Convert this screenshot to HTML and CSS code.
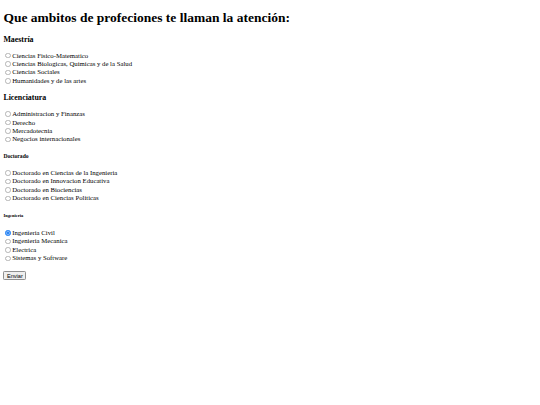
FILE: index.html
```html
<!DOCTYPE html>
<html>
<head>
<meta charset="utf-8">
<link rel="stylesheet" href="styles.css">
</head>
<body class="doc">
<h1 class="title">Que ambitos de profeciones te llaman la atención:</h1>
<form class="survey">
<h3 class="group">Maestría</h3>
<label class="opt"><input type="radio" name="m"><span>Ciencias Fisico-Matematico</span></label>
<label class="opt"><input type="radio" name="m"><span>Ciencias Biologicas, Quimicas y de la Salud</span></label>
<label class="opt"><input type="radio" name="m"><span>Ciencias Sociales</span></label>
<label class="opt"><input type="radio" name="m"><span>Humanidades y de las artes</span></label>
<h3 class="group">Licenciatura</h3>
<label class="opt"><input type="radio" name="l"><span>Administracion y Finanzas</span></label>
<label class="opt"><input type="radio" name="l"><span>Derecho</span></label>
<label class="opt"><input type="radio" name="l"><span>Mercadotecnia</span></label>
<label class="opt"><input type="radio" name="l"><span>Negocios internacionales</span></label>
<h5 class="group-sm">Doctorado</h5>
<label class="opt"><input type="radio" name="d"><span>Doctorado en Ciencias de la Ingenieria</span></label>
<label class="opt"><input type="radio" name="d"><span>Doctorado en Innovacion Educativa</span></label>
<label class="opt"><input type="radio" name="d"><span>Doctorado en Biociencias</span></label>
<label class="opt"><input type="radio" name="d"><span>Doctorado en Ciencias Politicas</span></label>
<h6 class="group-xs">Ingenieria</h6>
<label class="opt"><input type="radio" name="i" checked><span>Ingenieria Civil</span></label>
<label class="opt"><input type="radio" name="i"><span>Ingenieria Mecanica</span></label>
<label class="opt"><input type="radio" name="i"><span>Electrica</span></label>
<label class="opt"><input type="radio" name="i"><span>Sistemas y Software</span></label>
<div class="actions"><button type="submit" class="send">Enviar</button></div>
</form>
</body>
</html>
```
FILE: styles.css
```css
html, body {
  background: #fff;
}
.doc {
  margin: 3.375px;
  font-family: "Liberation Serif", "Times New Roman", serif;
  font-size: 6.75px;
  color: #000;
}
.title {
  font-size: 13.5px;
  line-height: 15.51px;
  margin: 6.7px 0 9.045px;
  font-weight: bold;
}
.survey {
  margin: 0;
}
.group {
  font-size: 7.898px;
  line-height: 9.07px;
  margin: 7.898px 0;
  font-weight: bold;
}
.group-sm {
  font-size: 5.6025px;
  line-height: 6.44px;
  margin: 9.357px 0;
  font-weight: bold;
}
.group-xs {
  font-size: 4.5225px;
  line-height: 5.2px;
  margin: 10.54px 0;
  font-weight: bold;
}
.opt {
  display: flex;
  align-items: flex-start;
  height: 8.4375px;
  font-size: 6.75px;
}
.opt input {
  appearance: none;
  -webkit-appearance: none;
  box-sizing: border-box;
  width: 5.484px;
  height: 5.484px;
  margin: 1.266px 1.266px 0 2.11px;
  border: 0.5px solid #b4b4b4;
  border-radius: 50%;
  background: #fff;
  flex: none;
}
.opt input:checked {
  border-color: #2b86f5;
  background: #2b86f5;
  box-shadow: inset 0 0 0 0.4px #cfe2fd;
}
.opt span {
  line-height: 8.9px;
  white-space: nowrap;
}
.actions {
  margin-top: 8.3px;
}
.send {
  display: block;
  font-family: "Liberation Sans", Arial, sans-serif;
  font-size: 5.625px;
  line-height: 6.5px;
  padding: 0.42px 2.53px;
  background: #efefef;
  border: 0.5px solid #8f8f8f;
  border-radius: 1.27px;
  color: #000;
  margin: 0;
}
```
